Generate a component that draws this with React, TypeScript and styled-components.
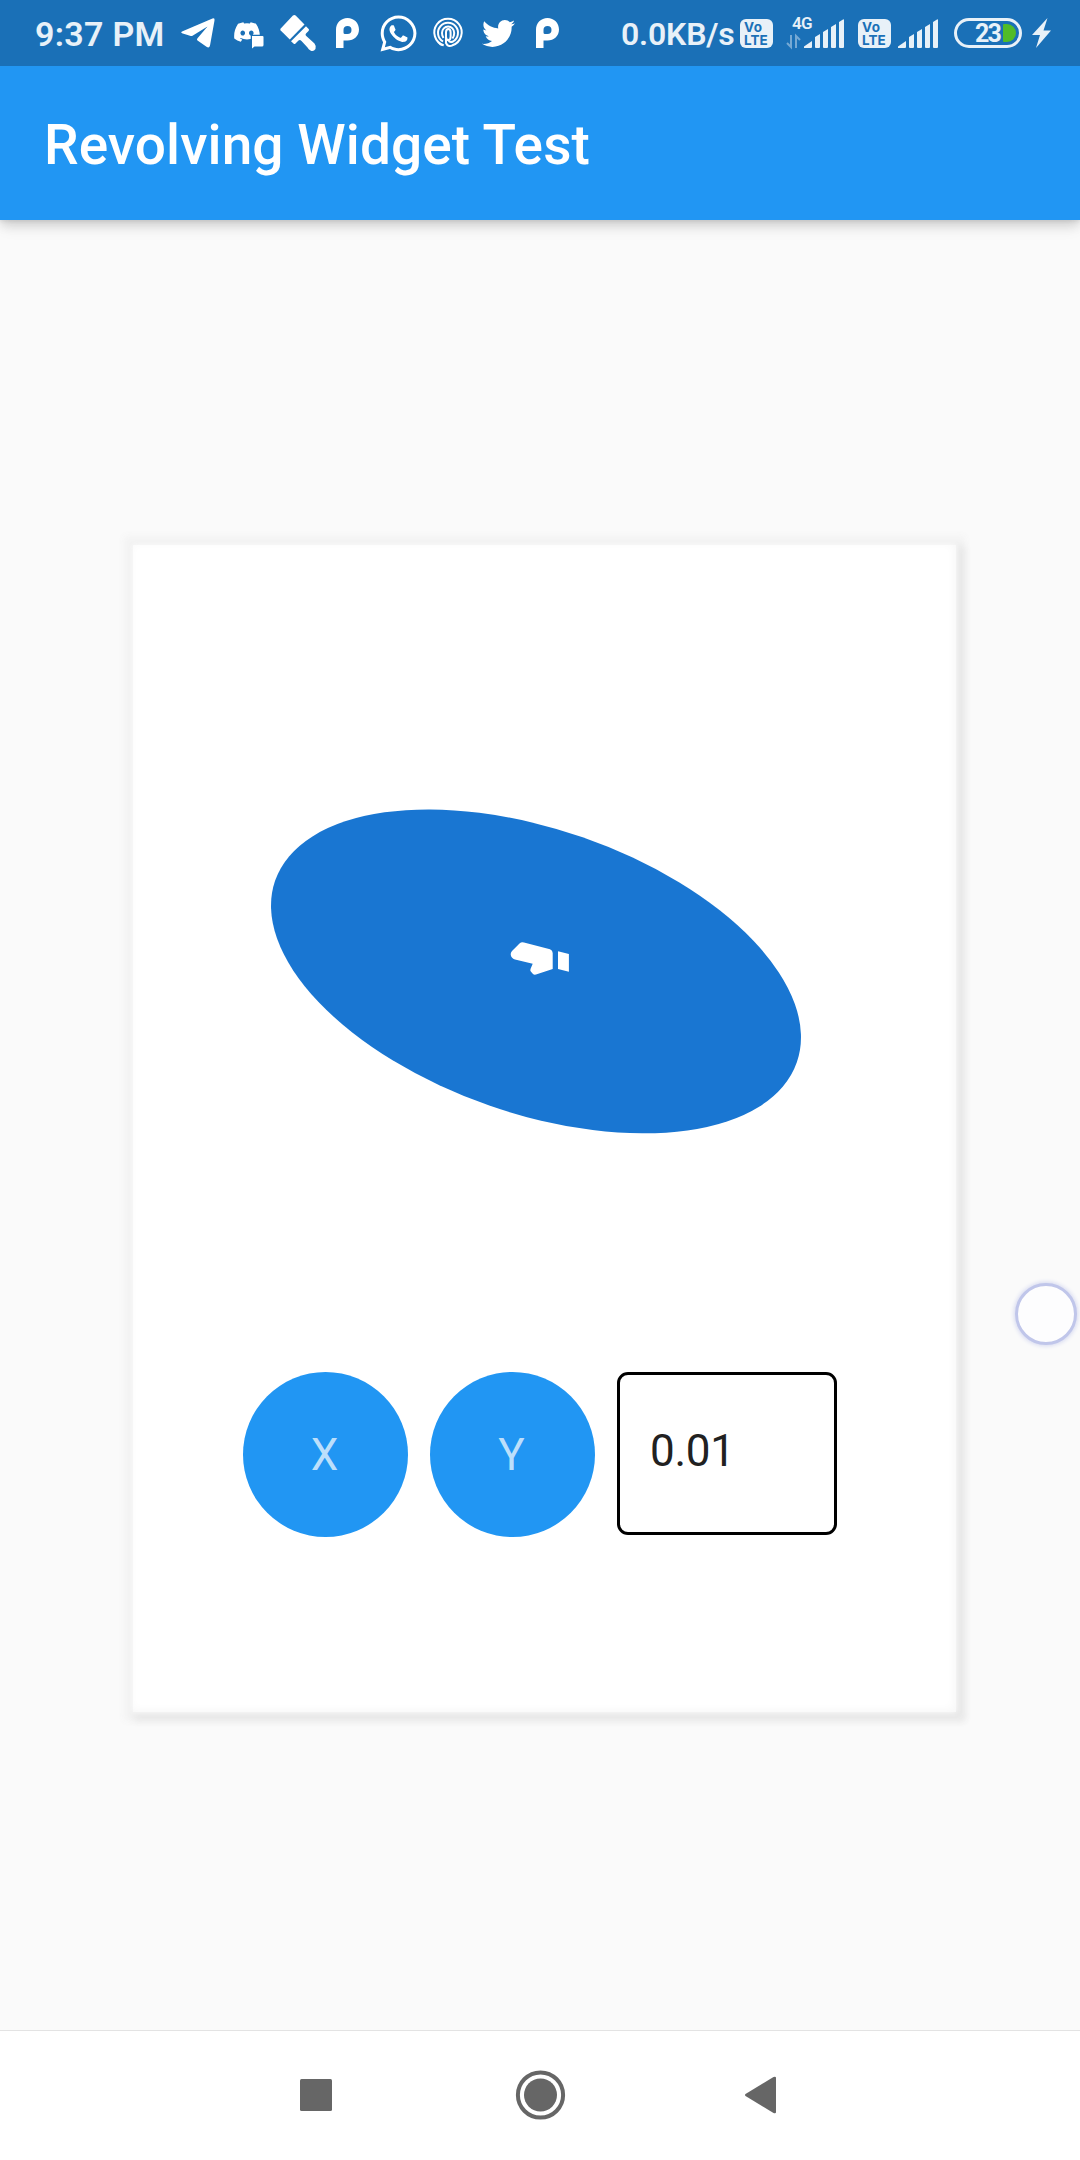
import React from "react";
import styled, { createGlobalStyle } from "styled-components";
import { FaDiscord, FaTwitter, FaWhatsapp } from "react-icons/fa";

const GlobalStyle = createGlobalStyle`
  * { box-sizing: border-box; }
  body { margin: 0; background: #fafafa; font-family: Roboto, "Liberation Sans", sans-serif; }
`;

const Screen = styled.div`
  width: 1080px;
  height: 2160px;
  display: flex;
  flex-direction: column;
  position: relative;
  overflow: hidden;
  background: #fafafa;
`;

const StatusBar = styled.header`
  flex: none;
  height: 66px;
  display: flex;
  align-items: center;
  justify-content: space-between;
  padding: 0 29px 0 35px;
  background: #1a70b7;
  color: #e8f1f8;
  z-index: 2;
`;

const StatusGroup = styled.div`
  display: flex;
  align-items: center;
  height: 66px;
`;

const StatusText = styled.span<{ $size: number; $spacing?: number; $width: number }>`
  width: ${(p) => p.$width}px;
  font-size: ${(p) => p.$size}px;
  letter-spacing: ${(p) => p.$spacing ?? 0}px;
  line-height: 66px;
  padding-top: 1px;
  font-weight: 600;
  white-space: nowrap;
`;

const Glyph = styled.span<{ $w: number; $gap: number }>`
  display: flex;
  justify-content: center;
  align-items: center;
  width: ${(p) => p.$w}px;
  height: 66px;
  margin-left: ${(p) => p.$gap}px;
  color: #fff;
  svg { display: block; flex: none; overflow: visible; }
`;

const DiscordMark = styled(Glyph)`
  position: relative;
  justify-content: flex-start;
`;

const DiscordFace = styled(FaDiscord)`
  margin-top: -3px;
`;

const ChatBubble = styled.svg`
  position: absolute;
  left: 17px;
  top: 35px;
`;

const VolteBadge = styled.span<{ $gap: number }>`
  display: flex;
  flex-direction: column;
  justify-content: center;
  width: 33px;
  height: 29px;
  margin: 1px 0 0 ${(p) => p.$gap}px;
  padding-left: 4px;
  border-radius: 6px;
  background: #e8f1f8;
  color: #1a70b7;
`;

const VolteLine = styled.span<{ $spacing: number }>`
  height: 13px;
  font-family: Inter, Roboto, sans-serif;
  font-weight: 700;
  font-size: 13.5px;
  line-height: 13px;
  letter-spacing: ${(p) => p.$spacing}px;
`;

const Network = styled.span`
  display: flex;
  position: relative;
  width: 58px;
  height: 66px;
  margin-left: 14px;
  align-items: center;
`;

const NetworkType = styled.span`
  position: absolute;
  left: 5px;
  top: 13px;
  font-size: 17px;
  line-height: 20px;
  font-weight: 600;
  letter-spacing: -0.8px;
`;

const TrafficArrows = styled.svg`
  margin-top: 17px;
`;

const Battery = styled.span`
  display: flex;
  align-items: center;
  width: 68px;
  height: 30px;
  margin-left: 16px;
  padding-left: 18px;
  border: 3px solid #e8f1f8;
  border-radius: 15px;
  font-size: 25px;
  line-height: 24px;
  font-weight: 700;
  letter-spacing: -1.8px;
`;

const Level = styled.span`
  width: 27px;
  padding-top: 1px;
`;

const Charge = styled.i`
  width: 13px;
  height: 18px;
  margin-left: 1px;
  flex: none;
  border-radius: 1px 9px 9px 1px;
  background: #51bc28;
`;

const AppBar = styled.div`
  flex: none;
  height: 154px;
  display: flex;
  align-items: center;
  padding: 4px 44px 0;
  background: #2196f3;
  box-shadow: 0 4px 11px rgba(0, 0, 0, 0.14), 0 10px 14px -2px rgba(0, 0, 0, 0.07), 0 2px 3px rgba(0, 0, 0, 0.05);
  z-index: 1;
`;

const Title = styled.h1`
  margin: 0;
  font-size: 55px;
  line-height: 64px;
  font-weight: 500;
  letter-spacing: 0.07px;
  color: #fff;
  white-space: nowrap;
`;

const Body = styled.main`
  flex: 1;
  display: flex;
  align-items: flex-start;
  padding: 325px 0 0 133px;
`;

const Card = styled.section`
  width: 823px;
  height: 1167px;
  display: flex;
  flex-direction: column;
  background: #fff;
  box-shadow:
    inset -2px -2px 8px rgba(0, 0, 0, 0.035),
    0 0 6px 0 #fff,
    5px 5px 7px 4px #e8e8e8,
    0 0 7px 9px #f3f3f3;
`;

const Disc = styled.svg`
  display: block;
  flex: none;
  width: 823px;
  height: 827px;
`;

const Controls = styled.div`
  display: flex;
  align-items: flex-start;
  gap: 22px;
  padding-left: 110px;
`;

const RoundButton = styled.button`
  width: 165px;
  height: 165px;
  padding: 1px 2px 0 0;
  border: 0;
  border-radius: 50%;
  background: #2196f3;
  color: #bcdffb;
  font: 400 44px/165px Roboto, sans-serif;
`;

const ValueField = styled.div`
  width: 220px;
  height: 163px;
  padding: 0 0 6px 30px;
  display: flex;
  align-items: center;
  border: 3px solid #000;
  border-radius: 11px;
  color: #212121;
  font-size: 44px;
  letter-spacing: -0.3px;
`;

const TouchDot = styled.div`
  position: absolute;
  left: 1015px;
  top: 1283px;
  width: 62px;
  height: 62px;
  border-radius: 50%;
  border: 3px solid #c0c6ea;
  background: #fdfdfe;
  box-shadow: 0 0 4px 1px #d3d7f0;
`;

const NavBar = styled.nav`
  flex: none;
  height: 130px;
  display: flex;
  justify-content: center;
  align-items: center;
  gap: 180px;
  padding-bottom: 1px;
  border-top: 1px solid #e3e3e3;
  background: #fff;
`;

const NavIcon = styled.svg`
  display: block;
  width: 50px;
  height: 50px;
  overflow: visible;
  fill: #666;
`;

const PMark = () => (
  <svg width="23" height="30" viewBox="0 0 23 30" fill="#fff">
    <path fillRule="evenodd" d="M0 30V11.500C0 5 5 0 11.500 0S23 5 23 11.500 18 22.500 11.500 22.500H7.500V30ZM11.500 8C9 8 7.500 9.500 7.500 12v2.500q0 1.500 1.500 1.500h2.500a4 4 0 0 0 0-8Z" />
  </svg>
);

const SignalBars = () => (
  <svg width="40" height="29" viewBox="0 0 40 29" fill="#e8f1f8">
    <path d="M0 29v-1.500L8 22v6a1 1 0 0 1-1 1ZM11 18l5-3v13a1 1 0 0 1-1 1h-3a1 1 0 0 1-1-1ZM19 13l5-3v18a1 1 0 0 1-1 1h-3a1 1 0 0 1-1-1ZM27 8l5-3v23a1 1 0 0 1-1 1h-3a1 1 0 0 1-1-1ZM35 3l4-2.600q1-.5 1 .6v27a1 1 0 0 1-1 1h-3a1 1 0 0 1-1-1Z" />
  </svg>
);

const Volte = ({ gap }: { gap: number }) => (
  <VolteBadge $gap={gap}>
    <VolteLine $spacing={0.5}>Vo</VolteLine>
    <VolteLine $spacing={0}>LTE</VolteLine>
  </VolteBadge>
);

export default function App() {
  return (
    <Screen>
      <GlobalStyle />
      <StatusBar>
        <StatusGroup>
          <StatusText $size={34} $width={128} $spacing={0.3}>9:37 PM</StatusText>
          <Glyph $w={34} $gap={18}>
            <svg width="34" height="30" viewBox="0 0 34 30" fill="#fff">
              <path d="M1 13.500 31.500.5Q34-.3 33.500 2.500L29 27.500Q28.300 30.500 25.500 28.800L16.500 22.500Q15.300 21.500 16.500 20.200L26.500 8.500 11.500 17.700Q10.300 18.300 9 17.800L1 15.200Q-.8 14.300 1 13.500Z" />
            </svg>
          </Glyph>
          <DiscordMark $w={30} $gap={18}>
            <DiscordFace size={28} />
            <ChatBubble width="15" height="15" viewBox="0 0 15 15">
              <path d="M2 1H12.500a1 1 0 0 1 1 1V10a1.500 1.500 0 0 1-1.500 1.500H4.500L2 13.500Z" fill="#fff" stroke="#1a70b7" strokeWidth="2.500" paintOrder="stroke" />
            </ChatBubble>
          </DiscordMark>
          <Glyph $w={36} $gap={17}>
            <svg width="36" height="36" viewBox="0 0 36 36" fill="#fff">
              <path d="M.7 13.500 12.700.8Q14.300-.6 15.900.8L24.500 9.500 9.800 24.500.7 15.500Q-.2 14.500.7 13.500Z" />
              <path d="M26 11.300 28.700 14Q29.500 15 28.500 16L26 18.500Q25 19.800 26 20.800L34.500 28.500Q36.500 31 35.500 34 33.500 37 30.500 35.500 28.500 34.500 27.500 32.500L21.500 26Q20 24.500 18.500 25.500L15.500 28.500Q14.500 29.500 13.500 28.500L11 26.300Z" />
            </svg>
          </Glyph>
          <Glyph $w={23} $gap={20}><PMark /></Glyph>
          <Glyph $w={36} $gap={21}><FaWhatsapp size={41} /></Glyph>
          <Glyph $w={30} $gap={17}>
            <svg width="30" height="30" viewBox="0 0 30 30" fill="none" stroke="#fff" strokeWidth="2">
              <path d="M10.500 27.300A13.700 13.700 0 1 1 19.500 27.300Q15 29.500 13 25V14.500a2.300 3.500 0 0 1 4.600 0v4a2.300 3.500 0 0 1-4.600 0" />
              <path d="M10 23.500a10 10 0 1 1 10 0Q17 25 15.500 22.500M10.500 27.300Q7 27 6 24.500M10.500 20Q9 18 9 15a6 6.500 0 0 1 12.200 0q0 3-1.700 5.500" />
            </svg>
          </Glyph>
          <Glyph $w={33} $gap={19}><FaTwitter size={33} /></Glyph>
          <Glyph $w={23} $gap={21}><PMark /></Glyph>
        </StatusGroup>
        <StatusGroup>
          <StatusText $size={32} $width={119} $spacing={-0.2}>0.0KB/s</StatusText>
          <Volte gap={0} />
          <Network>
            <NetworkType>4G</NetworkType>
            <Glyph $w={13} $gap={0}>
              <TrafficArrows width="13" height="13" viewBox="0 0 13 13" fill="none" stroke="#76a9d4" strokeWidth="2">
                <path d="M4 0V12L0 8M9 13V1l4 4" />
              </TrafficArrows>
            </Glyph>
            <Glyph $w={40} $gap={4}><SignalBars /></Glyph>
          </Network>
          <Volte gap={13} />
          <Glyph $w={40} $gap={7}><SignalBars /></Glyph>
          <Battery><Level>23</Level><Charge /></Battery>
          <Glyph $w={19} $gap={10}>
            <svg width="19" height="30" viewBox="0 0 19 30" fill="#e8f1f8">
              <path d="M15.500 0 0 17H8L4 30 19 12.500H11.500Z" />
            </svg>
          </Glyph>
        </StatusGroup>
      </StatusBar>
      <AppBar><Title>Revolving Widget Test</Title></AppBar>
      <Body>
        <Card>
          <Disc viewBox="133 545 823 827">
            <ellipse cx="536" cy="971.4" rx="276.2" ry="142" transform="rotate(19.2 536 971.4)" fill="#1976d2" />
            <path fill="#fff" d="M524 942.500 550 949.200Q552.700 950.500 552.700 953V969L536 974.500Q534 975 533 974L530.800 971.500Q530 970.500 530.500 969L532.700 963.700 515 959.500Q511 958 510.700 954.500 510.500 952.500 512 951L519.500 943.500Q521.500 941.700 524 942.500ZM558 951.300 568.900 954V971.700L558 969Z" />
          </Disc>
          <Controls>
            <RoundButton>X</RoundButton>
            <RoundButton>Y</RoundButton>
            <ValueField>0.01</ValueField>
          </Controls>
        </Card>
      </Body>
      <NavBar>
        <NavIcon viewBox="0 0 50 50"><rect x="15" y="9" width="32" height="32" rx="1.500" /></NavIcon>
        <NavIcon viewBox="0 0 50 50">
          <circle cx="25.500" cy="25" r="22.600" fill="none" stroke="#666" strokeWidth="4" />
          <circle cx="25.500" cy="25" r="16.500" />
        </NavIcon>
        <NavIcon viewBox="0 0 50 50"><path d="M.5 24Q-.5 25 .5 26L28.500 43Q31 44 31 42V8Q31 6 28.500 7Z" /></NavIcon>
      </NavBar>
      <TouchDot />
    </Screen>
  );
}
